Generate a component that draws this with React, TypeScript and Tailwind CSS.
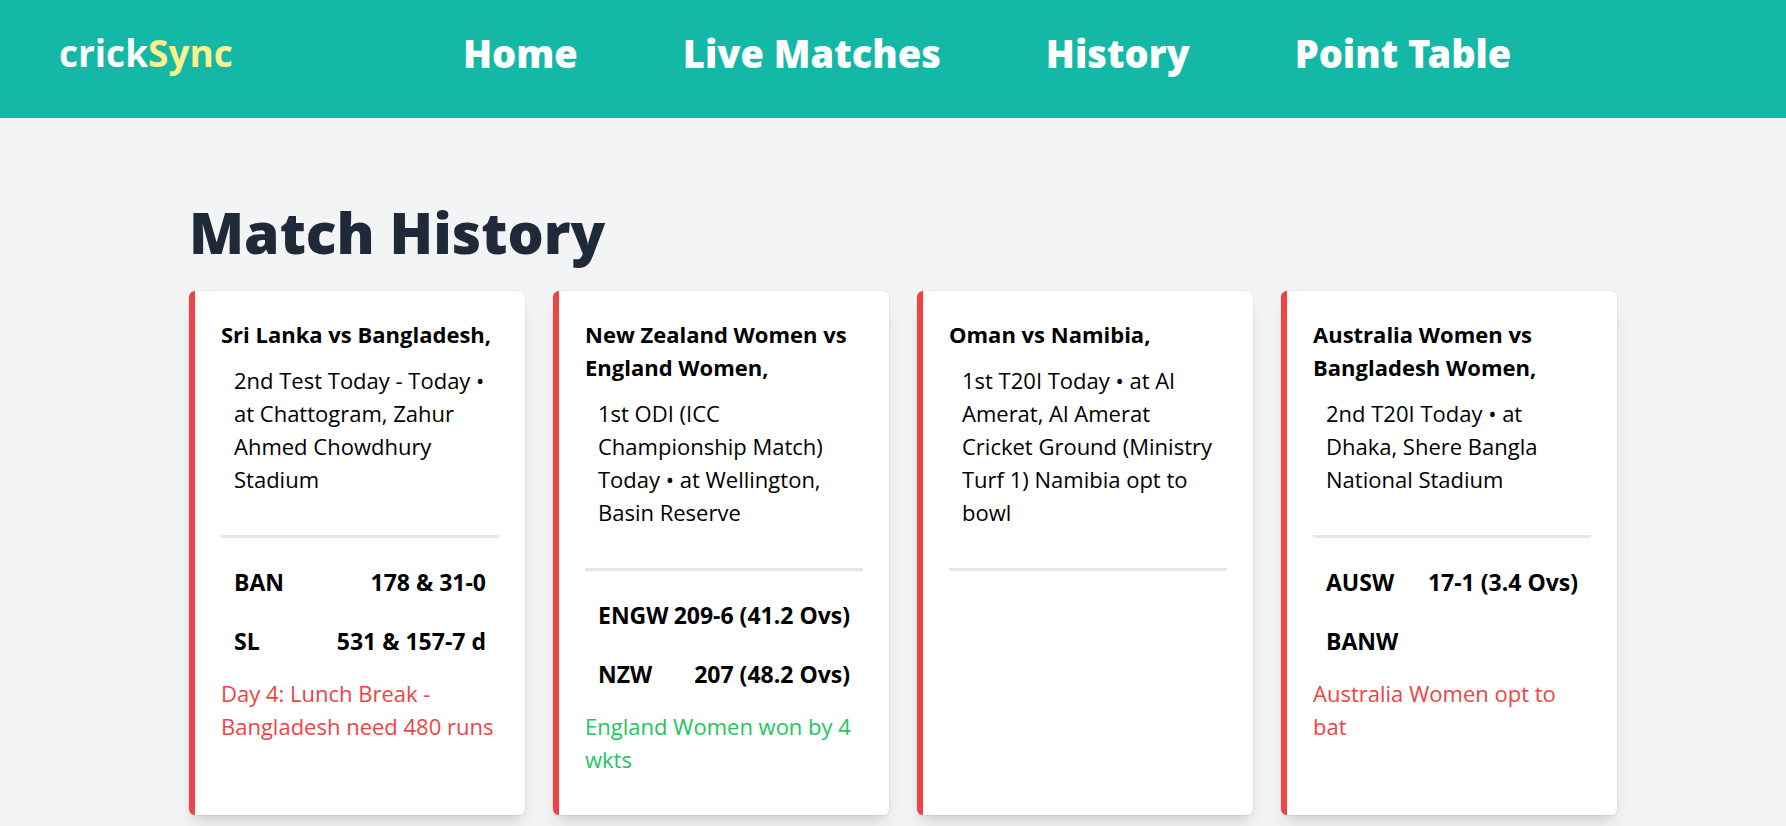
type Status = { text: string; won: boolean };

type Match = {
  title: string;
  details: string;
  scores: { team: string; score: string }[];
  status?: Status;
};

const navLinks = ["Home", "Live Matches", "History", "Point Table"];

const matches: Match[] = [
  {
    title: "Sri Lanka vs Bangladesh,",
    details: "2nd Test Today - Today • at Chattogram, Zahur Ahmed Chowdhury Stadium",
    scores: [
      { team: "BAN", score: "178 & 31-0" },
      { team: "SL", score: "531 & 157-7 d" },
    ],
    status: { text: "Day 4: Lunch Break - Bangladesh need 480 runs", won: false },
  },
  {
    title: "New Zealand Women vs England Women,",
    details: "1st ODI (ICC Championship Match) Today • at Wellington, Basin Reserve",
    scores: [
      { team: "ENGW", score: "209-6 (41.2 Ovs)" },
      { team: "NZW", score: "207 (48.2 Ovs)" },
    ],
    status: { text: "England Women won by 4 wkts", won: true },
  },
  {
    title: "Oman vs Namibia,",
    details:
      "1st T20I Today • at Al Amerat, Al Amerat Cricket Ground (Ministry Turf 1) Namibia opt to bowl",
    scores: [],
  },
  {
    title: "Australia Women vs Bangladesh Women,",
    details: "2nd T20I Today • at Dhaka, Shere Bangla National Stadium",
    scores: [
      { team: "AUSW", score: "17-1 (3.4 Ovs)" },
      { team: "BANW", score: "" },
    ],
    status: { text: "Australia Women opt to bat", won: false },
  },
];

function Header() {
  return (
    <header className="flex items-start bg-[#14b8a6] px-[59px] pt-[26px] pb-[38px] leading-[54px] text-white">
      <a href="#home" className="w-[404px] shrink-0 text-[37px] font-bold">
        crick<span className="text-[#fef08a]">Sync</span>
      </a>
      <nav className="flex gap-[105px] font-['Noto_Sans',sans-serif] text-[38px] font-black whitespace-nowrap">
        {navLinks.map((label) => (
          <a key={label} href="#">
            {label}
          </a>
        ))}
      </nav>
    </header>
  );
}

function MatchCard({ match }: { match: Match }) {
  return (
    <article className="rounded-md border-l-6 border-[#ef4444] bg-white px-[26px] pt-[27px] pb-[39px] shadow-[0_0_0_1px_rgba(0,0,0,0.04),0_14px_20px_-4px_rgba(0,0,0,0.1),0_6px_8px_-5px_rgba(0,0,0,0.1)]">
      <h2 className="font-bold">{match.title}</h2>
      <p className="p-[13px]">{match.details}</p>
      <hr className="mt-[26px] mb-[15px] border-t-3 border-[#e5e7eb]" />
      {match.scores.map(({ team, score }) => (
        <div key={team} className="flex justify-between p-[13px] text-[23px] leading-[33px] font-bold whitespace-nowrap">
          <span>{team}</span>
          <span>{score}</span>
        </div>
      ))}
      {match.status && (
        <p className={match.status.won ? "mt-[6px] text-[#22c55e]" : "mt-[6px] text-[#ef4444]"}>
          {match.status.text}
        </p>
      )}
    </article>
  );
}

export default function App() {
  return (
    <div className="min-h-screen bg-[#f3f4f6] font-['Open_Sans',sans-serif] text-[22px] leading-[33px] text-black">
      <Header />
      <main className="mx-auto max-w-[1448px] pt-[78px] pb-3 pl-5">
        <h1 className="font-['Noto_Sans',sans-serif] text-[57px] leading-[72px] font-black text-[#1f2937]">Match History</h1>
        <div className="mt-[23px] grid grid-cols-4 gap-7">
          {matches.map((match) => (
            <MatchCard key={match.title} match={match} />
          ))}
        </div>
      </main>
    </div>
  );
}
